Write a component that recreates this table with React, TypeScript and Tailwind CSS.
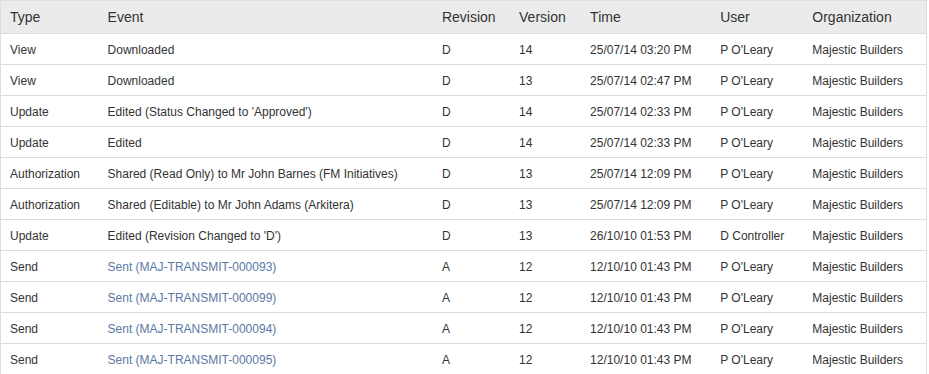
type Row = {
  type: string
  event: string
  link?: boolean
  revision: string
  version: string
  time: string
  user: string
  org: string
}

const rows: Row[] = [
  { type: 'View', event: 'Downloaded', revision: 'D', version: '14', time: '25/07/14 03:20 PM', user: "P O'Leary", org: 'Majestic Builders' },
  { type: 'View', event: 'Downloaded', revision: 'D', version: '13', time: '25/07/14 02:47 PM', user: "P O'Leary", org: 'Majestic Builders' },
  { type: 'Update', event: "Edited (Status Changed to 'Approved')", revision: 'D', version: '14', time: '25/07/14 02:33 PM', user: "P O'Leary", org: 'Majestic Builders' },
  { type: 'Update', event: 'Edited', revision: 'D', version: '14', time: '25/07/14 02:33 PM', user: "P O'Leary", org: 'Majestic Builders' },
  { type: 'Authorization', event: 'Shared (Read Only) to Mr John Barnes (FM Initiatives)', revision: 'D', version: '13', time: '25/07/14 12:09 PM', user: "P O'Leary", org: 'Majestic Builders' },
  { type: 'Authorization', event: 'Shared (Editable) to Mr John Adams (Arkitera)', revision: 'D', version: '13', time: '25/07/14 12:09 PM', user: "P O'Leary", org: 'Majestic Builders' },
  { type: 'Update', event: "Edited (Revision Changed to 'D')", revision: 'D', version: '13', time: '26/10/10 01:53 PM', user: 'D Controller', org: 'Majestic Builders' },
  { type: 'Send', event: 'Sent (MAJ-TRANSMIT-000093)', link: true, revision: 'A', version: '12', time: '12/10/10 01:43 PM', user: "P O'Leary", org: 'Majestic Builders' },
  { type: 'Send', event: 'Sent (MAJ-TRANSMIT-000099)', link: true, revision: 'A', version: '12', time: '12/10/10 01:43 PM', user: "P O'Leary", org: 'Majestic Builders' },
  { type: 'Send', event: 'Sent (MAJ-TRANSMIT-000094)', link: true, revision: 'A', version: '12', time: '12/10/10 01:43 PM', user: "P O'Leary", org: 'Majestic Builders' },
  { type: 'Send', event: 'Sent (MAJ-TRANSMIT-000095)', link: true, revision: 'A', version: '12', time: '12/10/10 01:43 PM', user: "P O'Leary", org: 'Majestic Builders' },
]

const headers = ['Type', 'Event', 'Revision', 'Version', 'Time', 'User', 'Organization']
const widths = ['w-[98px]', 'w-[334px]', 'w-[77px]', 'w-[71px]', 'w-[130px]', 'w-[92px]', 'w-[123px]']

const App = () => {
  return (
    <div className="h-[374px] w-[929px] overflow-hidden bg-white font-['Liberation_Sans',Arial,sans-serif] text-[#333]">
      <table className="w-[927px] table-fixed border-collapse border border-[#dddddd]">
        <colgroup>
          {widths.map((w, i) => (
            <col key={i} className={w} />
          ))}
        </colgroup>
        <thead>
          <tr className="h-[33px] bg-[#ebebeb]">
            {headers.map((h) => (
              <th key={h} className="border-b border-[#dddddd] pl-[9px] pt-[1px] text-left text-[14px] font-normal">
                {h}
              </th>
            ))}
          </tr>
        </thead>
        <tbody className="text-[12px]">
          {rows.map((row, i) => (
            <tr key={i} className="h-[31px] border-b border-[#dddddd]">
              <td className="pl-[9px] pt-[1px]">{row.type}</td>
              <td className={`pl-[9px] pt-[1px] ${row.link ? 'text-[#5a79a5]' : ''}`}>{row.event}</td>
              <td className="pl-[9px] pt-[1px]">{row.revision}</td>
              <td className="pl-[9px] pt-[1px]">{row.version}</td>
              <td className="pl-[9px] pt-[1px]">{row.time}</td>
              <td className="pl-[9px] pt-[1px]">{row.user}</td>
              <td className="pl-[9px] pt-[1px]">{row.org}</td>
            </tr>
          ))}
        </tbody>
      </table>
    </div>
  )
}

export default App
